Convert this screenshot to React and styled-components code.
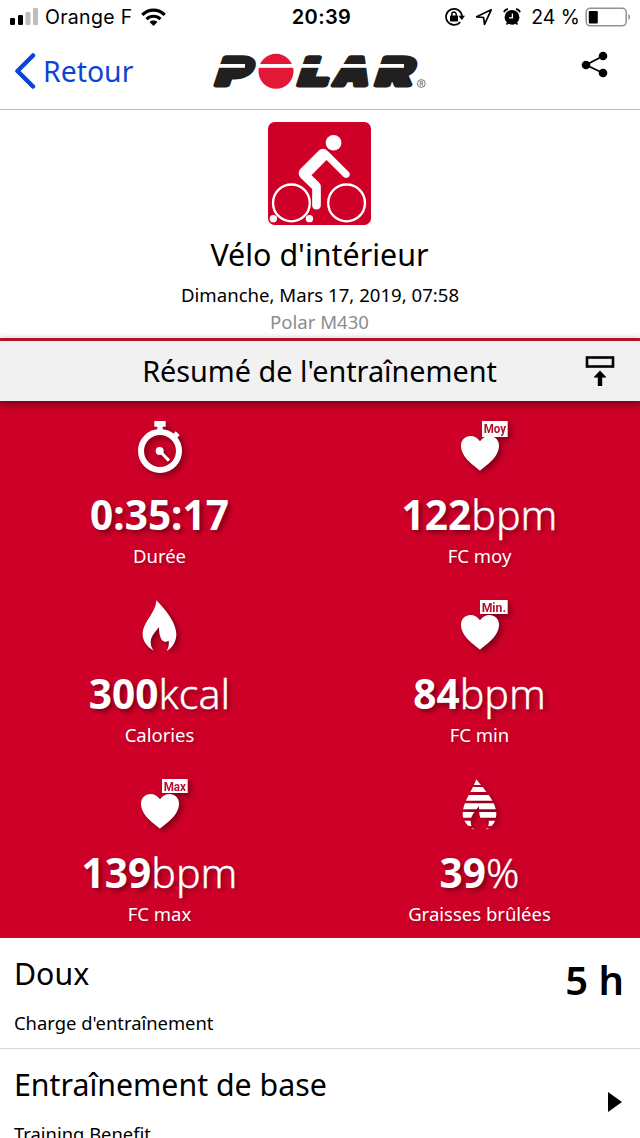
import React from "react";
import styled, { createGlobalStyle } from "styled-components";

const GlobalStyle = createGlobalStyle`
  * {
    box-sizing: border-box;
  }
  body {
    margin: 0;
    background: #fff;
    color: #000;
    font-family: "Noto Sans", "Open Sans", sans-serif;
  }
`;

const Screen = styled.div`
  width: 640px;
  height: 1138px;
  overflow: hidden;
  display: flex;
  flex-direction: column;
`;

const StatusBar = styled.div`
  height: 34px;
  flex: none;
  display: grid;
  grid-template-columns: 1fr auto 1fr;
  align-items: center;
  padding: 0 9px 0 10px;
  font-family: Inter, "Liberation Sans", sans-serif;
  font-size: 19.5px;
  white-space: nowrap;
`;

const StatusGroup = styled.div`
  display: flex;
  align-items: center;
  justify-content: ${(props) => (props.$end ? "flex-end" : "flex-start")};
`;

const Signal = styled.svg`
  width: 28px;
  height: 18px;
  margin-right: 7px;
`;

const Carrier = styled.span`
  letter-spacing: 0.3px;
`;

const Wifi = styled.svg`
  width: 25px;
  height: 19px;
  margin-left: 9px;
`;

const Clock = styled.span`
  padding-left: 2px;
  font-weight: 600;
  font-size: 20px;
  letter-spacing: 0.4px;
`;

const StatusIcon = styled.svg`
  width: 20px;
  height: 20px;
  margin-right: ${(props) => props.$gap || 0}px;
`;

const Battery = styled.svg`
  width: 46px;
  height: 20px;
  margin-left: 5px;
`;

const NavBar = styled.div`
  height: 76px;
  flex: none;
  display: grid;
  grid-template-columns: 1fr auto 1fr;
  border-bottom: 1px solid #bcbcbc;
`;

const Back = styled.div`
  display: flex;
  align-items: center;
  height: 73px;
  padding-left: 14px;
  color: #0a45d8;
  font-size: 28.4px;
`;

const Chevron = styled.svg`
  width: 22px;
  height: 38px;
  margin-right: 7px;
`;

const Logo = styled.svg`
  width: 220px;
  height: 64px;
  margin-top: 6px;
`;

const Share = styled.svg`
  width: 28px;
  height: 28px;
  margin: 17px 31px 0 0;
  justify-self: end;
`;

const Hero = styled.div`
  height: 228px;
  flex: none;
  padding-top: 12px;
  display: flex;
  flex-direction: column;
  align-items: center;
`;

const SportIcon = styled.svg`
  width: 103px;
  height: 103px;
  margin-right: 1px;
`;

const SportName = styled.div`
  margin: 10px 1px 0 0;
  font-size: 30.4px;
  line-height: 40px;
`;

const SportDate = styled.div`
  margin-top: 7px;
  font-size: 18.6px;
  line-height: 26px;
`;

const Device = styled.div`
  margin: 1px 1px 0 0;
  color: #8c8c8c;
  font-size: 18.6px;
  line-height: 26px;
`;

const SummaryBar = styled.div`
  height: 63px;
  flex: none;
  position: relative;
  display: grid;
  grid-template-columns: 80px 1fr 80px;
  align-items: center;
  border-top: 3px solid #b8102c;
  background: #f1f1f1;
  box-shadow: 0 3px 8px rgba(0, 0, 0, 0.5);
  font-size: 28.8px;
  text-align: center;
`;

const SummaryTitle = styled.span`
  padding: 0 1px 2px 0;
`;

const Collapse = styled.svg`
  width: 30px;
  height: 30px;
  margin-left: 25px;
`;

const Stats = styled.div`
  height: 537px;
  flex: none;
  display: grid;
  grid-template-columns: 1fr 1fr;
  grid-auto-rows: 179px;
  background: #cf0028;
  color: #fff;
`;

const Stat = styled.div`
  padding: 15px 1px 0 0;
  display: flex;
  flex-direction: column;
  align-items: center;
`;

const StatIcon = styled.svg`
  width: 60px;
  height: 60px;
  margin: 0 -1px 14px 0;
  overflow: visible;
  filter: drop-shadow(3px 3px 3px rgba(0, 0, 0, 0.4));
`;

const StatValue = styled.div`
  height: 50px;
  font-size: 40.6px;
  line-height: 50px;
  font-weight: 700;
  text-shadow: 3px 3px 5px rgba(0, 0, 0, 0.4);
`;

const Unit = styled.span`
  font-size: 41.2px;
  line-height: 1;
  font-weight: 300;
  -webkit-text-stroke: 0.4px #fff;
`;

const StatLabel = styled.div`
  margin-top: 3px;
  font-size: 18.5px;
  line-height: 26px;
  text-shadow: 2px 2px 4px rgba(0, 0, 0, 0.25);
`;

const Row = styled.div`
  height: 111px;
  flex: none;
  display: flex;
  justify-content: space-between;
  padding: 16px 16px 0 14px;
  border-bottom: 1px solid #d8d8d8;
`;

const RowTitle = styled.div`
  font-size: 30.3px;
  line-height: 40px;
`;

const RowCaption = styled.div`
  margin-top: 16px;
  font-size: 18.4px;
  line-height: 26px;
`;

const RowValue = styled.div`
  font-size: 40px;
  line-height: 52px;
  font-weight: 600;
`;

const Arrow = styled.svg`
  width: 14px;
  height: 20px;
  margin: 27px 2px 0 0;
`;

const Stopwatch = () => (
  <StatIcon viewBox="210 33 180 180" fill="#fff">
    <circle cx="300" cy="138" r="57" fill="none" stroke="#fff" strokeWidth="18" />
    <path d="M283 48h34v17h-9v14h-16v-14h-9z" />
    <path d="M335 93L347 79L359 90L347 104z" />
    <circle cx="299" cy="138" r="12" />
    <path d="M299 138L327 167" stroke="#fff" strokeWidth="9" />
  </StatIcon>
);

const Heart = ({ tag }) => {
  const wide = tag.length > 3;
  return (
    <StatIcon viewBox="210 33 180 180" fill="#fff">
      <path d="M300 197C285 183 243 158 243 122C243 91 282 82 300 109C318 82 357 91 357 122C357 158 315 183 300 197z" />
      <rect x={wide ? 300 : 306} y="48" width={wide ? 83 : 77} height={tag === "Moy" ? 48 : 42} />
      <text
        x={wide ? 305 : 311}
        y="84"
        fill="#b3112f"
        fontFamily="Roboto"
        fontWeight="700"
        fontSize="40"
        textLength={wide ? 73 : 67}
        lengthAdjust="spacingAndGlyphs"
      >
        {tag}
      </text>
    </StatIcon>
  );
};

const flamePath =
  "M289 47C310 68 349 112 349 149C349 170 338 189 320 199C325 190 328 181 326 168C310 178 297 165 297 127C287 140 272 155 272 173C272 183 276 192 281 198C261 187 248 169 248 149C248 112 287 87 289 47z";

const dropPath =
  "M289 46C310 74 349 112 349 149C349 170 338 189 318 197C325 188 328 180 326 168L308 169C299 164 297 150 297 126C287 140 272 155 272 173C272 183 276 192 284 197C261 187 248 169 248 149C248 116 277 80 289 46z";

const Flame = () => (
  <StatIcon viewBox="210 31 180 180" fill="#fff">
    <path d={flamePath} />
  </StatIcon>
);

const FatFlame = () => (
  <StatIcon viewBox="210 30 180 180" fill="#fff">
    <clipPath id="stripes">
      <rect x="240" y="44" width="120" height="19" />
      <rect x="240" y="69" width="120" height="15" />
      <rect x="240" y="93" width="120" height="17" />
      <rect x="240" y="118" width="120" height="18" />
      <rect x="240" y="144" width="120" height="17" />
      <rect x="240" y="170" width="120" height="16" />
      <rect x="240" y="193" width="120" height="6" />
    </clipPath>
    <path d={dropPath} clipPath="url(#stripes)" />
  </StatIcon>
);

const stats = [
  { icon: <Stopwatch />, value: "0:35:17", label: "Durée" },
  { icon: <Heart tag="Moy" />, value: "122", unit: "bpm", label: "FC moy" },
  { icon: <Flame />, value: "300", unit: "kcal", label: "Calories" },
  { icon: <Heart tag="Min." />, value: "84", unit: "bpm", label: "FC min" },
  { icon: <Heart tag="Max" />, value: "139", unit: "bpm", label: "FC max" },
  { icon: <FatFlame />, value: "39", unit: "%", label: "Graisses brûlées" },
];

const PolarLogo = () => (
  <Logo viewBox="210 40 220 64">
    <g
      fill="#221f20"
      stroke="#221f20"
      strokeWidth="5"
      strokeLinejoin="round"
      fontFamily="Inter"
      fontWeight="900"
      fontSize="37.5"
    >
      <text transform="translate(214.5 85.3) skewX(-18)" textLength="33" lengthAdjust="spacingAndGlyphs">P</text>
      <text transform="translate(297 85.3) skewX(-18)" textLength="29" lengthAdjust="spacingAndGlyphs">L</text>
      <text transform="translate(332.5 85.3) skewX(-14)" textLength="34" lengthAdjust="spacingAndGlyphs">A</text>
      <text transform="translate(374.5 85.3) skewX(-18)" textLength="35" lengthAdjust="spacingAndGlyphs">R</text>
    </g>
    <g fill="#221f20">
      <rect x="230" y="60" width="15" height="14" />
      <rect x="390" y="60" width="14" height="14" />
      <rect x="347" y="67" width="14" height="11" />
    </g>
    <circle cx="276" cy="71.3" r="17.5" fill="#e31837" />
    <g fill="#fff">
      <rect x="213" y="64" width="32" height="3.8" />
      <rect x="257" y="64" width="38" height="3.8" />
      <rect x="297" y="64" width="30" height="3.8" />
      <rect x="330" y="64" width="42" height="3.8" />
      <rect x="374" y="64" width="30" height="3.8" />
    </g>
    <circle cx="421.3" cy="83.5" r="3.9" fill="none" stroke="#555" strokeWidth="0.8" />
    <text x="419.4" y="85.8" fontFamily="Inter" fontSize="6" fill="#444">R</text>
  </Logo>
);

const App = () => {
  return (
    <Screen>
      <GlobalStyle />
      <StatusBar>
        <StatusGroup>
          <Signal viewBox="0 0 28 18">
            <rect x="0" y="10" width="5" height="7" rx="1.3" />
            <rect x="8" y="7" width="5" height="10" rx="1.3" />
            <rect x="15.5" y="4" width="5" height="13" rx="1.3" fill="#bdbdbd" />
            <rect x="23" y="0" width="5" height="17" rx="1.3" fill="#bdbdbd" />
          </Signal>
          <Carrier>Orange F</Carrier>
          <Wifi viewBox="0 0 24 18" fill="none" stroke="#000" strokeWidth="3">
            <path d="M1.2 6.4C7.4 0.4 16.6 0.4 22.8 6.4" />
            <path d="M5.3 10.5C9.2 6.9 14.8 6.9 18.7 10.5" />
            <path d="M8.2 13.4C10.3 11.5 13.7 11.5 15.8 13.4L12 17.2z" fill="#000" stroke="none" />
          </Wifi>
        </StatusGroup>
        <Clock>20:39</Clock>
        <StatusGroup $end>
          <StatusIcon viewBox="0 0 20 20" $gap={9}>
            <path d="M15.2 15A8 8 0 1 1 17 9" fill="none" stroke="#000" strokeWidth="1.7" />
            <path d="M13.5 8.7h6.5l-3.2 4.2z" />
            <rect x="5" y="8.5" width="8" height="6" rx="0.8" />
            <path d="M6.8 9V7.2a2.2 2.2 0 0 1 4.4 0V9" fill="none" stroke="#000" strokeWidth="1.4" />
          </StatusIcon>
          <StatusIcon viewBox="0 0 20 20" $gap={8}>
            <path d="M17.2 2.8L2.6 9.8L9.6 10.5L10.5 17.4z" fill="none" stroke="#000" strokeWidth="1.7" strokeLinejoin="round" />
          </StatusIcon>
          <StatusIcon viewBox="0 0 20 20" $gap={9}>
            <circle cx="10" cy="10.3" r="7.4" />
            <path d="M2 5.2C2.6 3.5 4 2.3 6 2.2M18 5.2C17.4 3.5 16 2.3 14 2.2M4.5 17.5l1.5-1.8M15.5 17.5l-1.5-1.8" fill="none" stroke="#000" strokeWidth="1.7" />
            <path d="M10.4 6.5v4.4H7" fill="none" stroke="#fff" strokeWidth="1.3" />
          </StatusIcon>
          <span>24 %</span>
          <Battery viewBox="0 0 46 20">
            <rect x="1.2" y="1.2" width="40" height="17.6" rx="4" fill="#fff" stroke="#929292" strokeWidth="1.5" />
            <rect x="3.8" y="4" width="9" height="12.5" rx="1" />
            <path d="M43.3 7c2.4 1 2.4 5 0 6z" fill="#929292" />
          </Battery>
        </StatusGroup>
      </StatusBar>
      <NavBar>
        <Back>
          <Chevron viewBox="0 0 22 38">
            <path d="M19 3.5L3.5 19L19 34.5" fill="none" stroke="#0a45d8" strokeWidth="4.5" strokeLinecap="round" strokeLinejoin="round" />
          </Chevron>
          Retour
        </Back>
        <PolarLogo />
        <Share viewBox="0 0 28 28">
          <path d="M22 5L5 14L22 22" fill="none" stroke="#000" strokeWidth="1.8" />
          <circle cx="22" cy="5" r="4.3" />
          <circle cx="5" cy="14" r="4.3" />
          <circle cx="22" cy="22" r="4.3" />
        </Share>
      </NavBar>
      <Hero>
        <SportIcon viewBox="295 37 308 308">
          <rect x="295" y="37" width="308" height="308" rx="20" fill="#cf0028" />
          <g fill="none" stroke="#fff" strokeWidth="7">
            <circle cx="365" cy="279" r="55" />
            <circle cx="530" cy="279" r="55" />
          </g>
          <g fill="#fff">
            <circle cx="491" cy="99" r="23.5" />
            <circle cx="311" cy="326" r="11" />
            <circle cx="419" cy="326" r="11" />
            <path d="M447 122Q460 112 473 123L536 186Q543 194 537 201Q530 207 522 202L470 151L425 196L447 217Q453 223 453 232V285Q453 298 440 299Q427 298 427 286V237L391 202Q382 190 391 178z" />
          </g>
        </SportIcon>
        <SportName>Vélo d'intérieur</SportName>
        <SportDate>Dimanche, Mars 17, 2019, 07:58</SportDate>
        <Device>Polar M430</Device>
      </Hero>
      <SummaryBar>
        <span />
        <SummaryTitle>Résumé de l'entraînement</SummaryTitle>
        <Collapse viewBox="0 0 30 30">
          <rect x="2" y="1.5" width="26" height="9" fill="none" stroke="#000" strokeWidth="2.6" />
          <path d="M15 14.5L21.5 21.5H17.2V30H12.8V21.5H8.5z" />
        </Collapse>
      </SummaryBar>
      <Stats>
        {stats.map((stat) => (
          <Stat key={stat.label}>
            {stat.icon}
            <StatValue>
              {stat.value}
              {stat.unit && <Unit>{stat.unit}</Unit>}
            </StatValue>
            <StatLabel>{stat.label}</StatLabel>
          </Stat>
        ))}
      </Stats>
      <Row>
        <div>
          <RowTitle>Doux</RowTitle>
          <RowCaption>Charge d'entraînement</RowCaption>
        </div>
        <RowValue>5 h</RowValue>
      </Row>
      <Row>
        <div>
          <RowTitle>Entraînement de base</RowTitle>
          <RowCaption>Training Benefit</RowCaption>
        </div>
        <Arrow viewBox="0 0 14 20">
          <path d="M0 0L14 10L0 20z" />
        </Arrow>
      </Row>
    </Screen>
  );
};

export default App;
